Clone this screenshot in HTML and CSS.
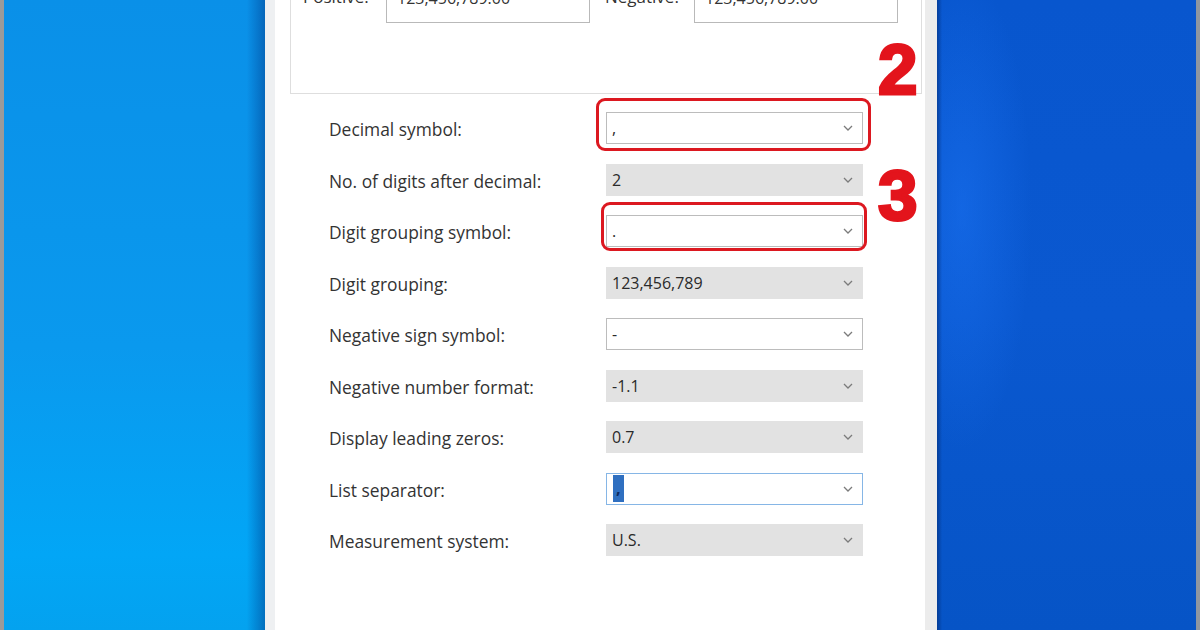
FILE: index.html
```html
<!DOCTYPE html>
<html lang="en">
<head>
    <meta charset="UTF-8">
    <meta name="viewport" content="width=device-width, initial-scale=1.0">
    <title>Customize Format - Numbers</title>
    <link rel="stylesheet" href="styles.css">
</head>
<body>
    <div class="screen">
        <div class="desktop desktop-left"></div>

        <div class="dialog">
            <div class="sample-group">
                <div class="sample-row">
                    <span class="sample-label">Positive:</span>
                    <div class="sample-box">123,456,789.00</div>
                    <span class="sample-label sample-neg">Negative:</span>
                    <div class="sample-box">123,456,789.00</div>
                </div>
            </div>

            <div class="settings">
                <div class="setting">
                    <label>Decimal symbol:</label>
                    <div class="combo">
                        <span class="value">,</span>
                        <svg class="chevron" width="10" height="6" viewBox="0 0 10 6"><polyline points="1,1 5,5 9,1"/></svg>
                        <div class="mark mark-2"></div>
                        <span class="step step-2">2</span>
                    </div>
                </div>
                <div class="setting">
                    <label>No. of digits after decimal:</label>
                    <div class="combo disabled">
                        <span class="value">2</span>
                        <svg class="chevron" width="10" height="6" viewBox="0 0 10 6"><polyline points="1,1 5,5 9,1"/></svg>
                    </div>
                </div>
                <div class="setting">
                    <label>Digit grouping symbol:</label>
                    <div class="combo">
                        <span class="value">.</span>
                        <svg class="chevron" width="10" height="6" viewBox="0 0 10 6"><polyline points="1,1 5,5 9,1"/></svg>
                        <div class="mark mark-3"></div>
                        <span class="step step-3">3</span>
                    </div>
                </div>
                <div class="setting">
                    <label>Digit grouping:</label>
                    <div class="combo disabled">
                        <span class="value">123,456,789</span>
                        <svg class="chevron" width="10" height="6" viewBox="0 0 10 6"><polyline points="1,1 5,5 9,1"/></svg>
                    </div>
                </div>
                <div class="setting">
                    <label>Negative sign symbol:</label>
                    <div class="combo">
                        <span class="value">-</span>
                        <svg class="chevron" width="10" height="6" viewBox="0 0 10 6"><polyline points="1,1 5,5 9,1"/></svg>
                    </div>
                </div>
                <div class="setting">
                    <label>Negative number format:</label>
                    <div class="combo disabled">
                        <span class="value">-1.1</span>
                        <svg class="chevron" width="10" height="6" viewBox="0 0 10 6"><polyline points="1,1 5,5 9,1"/></svg>
                    </div>
                </div>
                <div class="setting">
                    <label>Display leading zeros:</label>
                    <div class="combo disabled">
                        <span class="value">0.7</span>
                        <svg class="chevron" width="10" height="6" viewBox="0 0 10 6"><polyline points="1,1 5,5 9,1"/></svg>
                    </div>
                </div>
                <div class="setting">
                    <label>List separator:</label>
                    <div class="combo focused">
                        <span class="value"><span class="selected-text">,</span></span>
                        <svg class="chevron" width="10" height="6" viewBox="0 0 10 6"><polyline points="1,1 5,5 9,1"/></svg>
                    </div>
                </div>
                <div class="setting">
                    <label>Measurement system:</label>
                    <div class="combo disabled">
                        <span class="value">U.S.</span>
                        <svg class="chevron" width="10" height="6" viewBox="0 0 10 6"><polyline points="1,1 5,5 9,1"/></svg>
                    </div>
                </div>
            </div>
        </div>

        <div class="desktop desktop-right"></div>
    </div>
</body>
</html>
```

FILE: styles.css
```css
body {
    margin: 0;
    font-family: 'Open Sans', 'Noto Sans', sans-serif;
    background-color: #ffffff;
    overflow: hidden;
}

.screen {
    display: flex;
    width: 1200px;
    height: 630px;
    overflow: hidden;
}

.desktop {
    height: 100%;
}

.desktop-left {
    width: 261px;
    border-left: 4px solid #9a9a9a;
    background:
        linear-gradient(90deg, rgba(0, 0, 0, 0) 93%, rgba(0, 60, 140, 0.5) 100%),
        linear-gradient(180deg, #0a90e8 0%, #0a99ee 55%, #02a6f6 88%, #04a2ef 100%);
}

.desktop-right {
    width: 259px;
    border-right: 4px solid #8f96a0;
    background:
        linear-gradient(90deg, rgba(0, 40, 110, 0.55) 0%, rgba(0, 0, 0, 0) 2%),
        radial-gradient(ellipse 70px 240px at 25px 210px, rgba(30, 120, 250, 0.45), rgba(30, 120, 250, 0) 100%),
        linear-gradient(180deg, #0856ce 0%, #0a58d0 50%, #0654c6 100%);
}

.dialog {
    width: 650px;
    height: 100%;
    background-color: #ffffff;
    border-left: 10px solid #eef0f2;
    border-right: 12px solid #ececec;
    position: relative;
}

/* sample box (top is cropped off) */
.sample-group {
    margin: -40px 3px 0 15px;
    height: 134px;
    border: 1px solid #dedede;
    box-sizing: border-box;
    padding: 30px 0 0 12px;
}

.sample-row {
    display: flex;
    align-items: flex-start;
}

.sample-label {
    font-size: 17px;
    color: #333;
    line-height: 12px;
    width: 83px;
}

.sample-neg {
    margin-left: 15px;
    width: 89px;
}

.sample-box {
    width: 204px;
    height: 32px;
    box-sizing: border-box;
    border: 1px solid #b9b9b9;
    padding: 0 10px;
    font-size: 16px;
    line-height: 12px;
    color: #333;
}

/* settings list */
.settings {
    display: flex;
    flex-direction: column;
    gap: 19.5px;
    padding-left: 54px;
    margin-top: 18px;
}

.setting {
    display: flex;
    align-items: center;
    height: 32px;
}

.setting label {
    width: 277px;
    font-size: 17.4px;
    color: #333;
    padding-top: 2px;
}

.combo {
    position: relative;
    width: 257px;
    height: 32px;
    box-sizing: border-box;
    border: 1px solid #bcbcbc;
    background-color: #fff;
    display: flex;
    align-items: center;
    justify-content: space-between;
    padding: 0 9px 0 5px;
}

.combo.disabled {
    background-color: #e2e2e2;
    border-color: #e2e2e2;
}

.combo.focused {
    border-color: #86b6e6;
}

.value {
    font-size: 16px;
    color: #2a2a2a;
    display: flex;
    align-items: center;
    height: 100%;
}

.selected-text {
    display: inline-block;
    background-color: #2f6fc0;
    color: #0e2a60;
    font-weight: bold;
    height: 27px;
    line-height: 27px;
    padding: 0 3px;
    margin-left: 1px;
}

.chevron polyline {
    fill: none;
    stroke: #7b7b7b;
    stroke-width: 1.3;
}

/* red annotations drawn over the screenshot */
.mark {
    position: absolute;
    border: 3px solid #dc1820;
    border-radius: 9px;
}

.mark-2 {
    left: -11px;
    right: -9px;
    top: -15px;
    bottom: -8px;
}

.mark-3 {
    left: -6px;
    right: -5px;
    top: -14px;
    bottom: -5px;
}

.step {
    position: absolute;
    left: 271px;
    font-family: 'Liberation Sans', Arial, sans-serif;
    font-weight: bold;
    font-size: 71px;
    line-height: 70px;
    color: #e3141c;
    -webkit-text-stroke: 3px #e3141c;
}

.step-2 {
    top: -78px;
}

.step-3 {
    top: -55px;
}
```
